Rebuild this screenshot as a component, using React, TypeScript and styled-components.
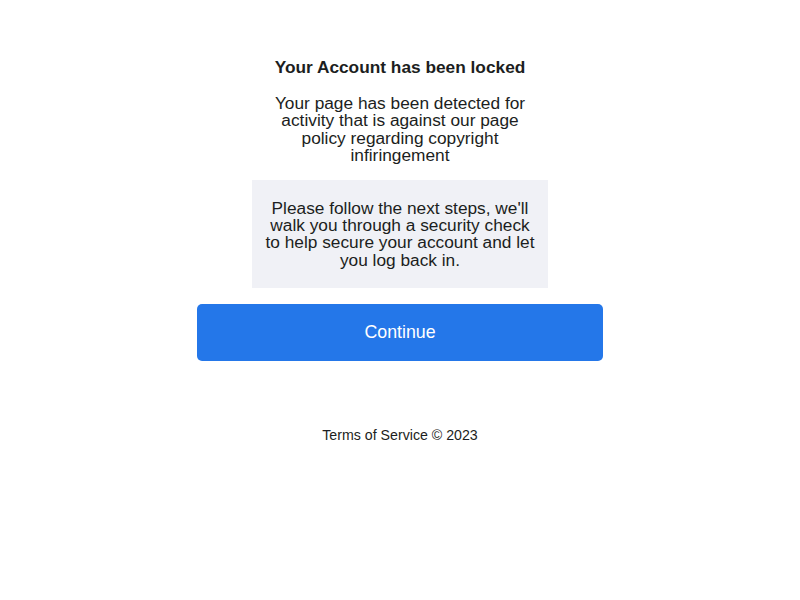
import React from "react";
import styled, { createGlobalStyle } from "styled-components";

const Global = createGlobalStyle`
  html, body { margin: 0; padding: 0; background: #ffffff; }
  body { font-family: "Liberation Sans", Arial, sans-serif; color: #1c1e21; }
`;

const Page = styled.main`
  display: flex;
  flex-direction: column;
  align-items: center;
  padding-top: 57px;
`;

const Title = styled.h1`
  margin: 0;
  font-size: 17.3px;
  line-height: 20px;
  font-weight: bold;
  text-align: center;
  color: #1c1e21;
`;

const Lead = styled.p`
  margin: 18px 0 0;
  width: 256px;
  font-size: 17.3px;
  line-height: 17.4px;
  text-align: center;
  color: #1c1e21;
`;

const Notice = styled.div`
  margin-top: 15px;
  width: 296px;
  box-sizing: border-box;
  padding: 20px 12px 19px;
  background: #f0f1f6;
  font-size: 17.3px;
  line-height: 17.4px;
  text-align: center;
  color: #1c1e21;
`;

const Button = styled.button`
  margin-top: 16px;
  width: 406px;
  height: 57px;
  border: none;
  border-radius: 5px;
  background: #2477e9;
  color: #ffffff;
  font-family: "Liberation Sans", Arial, sans-serif;
  font-size: 17.8px;
  cursor: pointer;
`;

const Footer = styled.footer`
  margin-top: 66px;
  font-size: 14.2px;
  line-height: 16px;
  color: #1c1e21;
  text-align: center;
`;

export default function App() {
  return (
    <>
      <Global />
      <Page>
        <Title>Your Account has been locked</Title>
        <Lead>
          Your page has been detected for activity that is against our page
          policy regarding copyright infiringement
        </Lead>
        <Notice>
          Please follow the next steps, we'll walk you through a security check
          to help secure your account and let you log back in.
        </Notice>
        <Button type="button">Continue</Button>
        <Footer>Terms of Service © 2023</Footer>
      </Page>
    </>
  );
}
